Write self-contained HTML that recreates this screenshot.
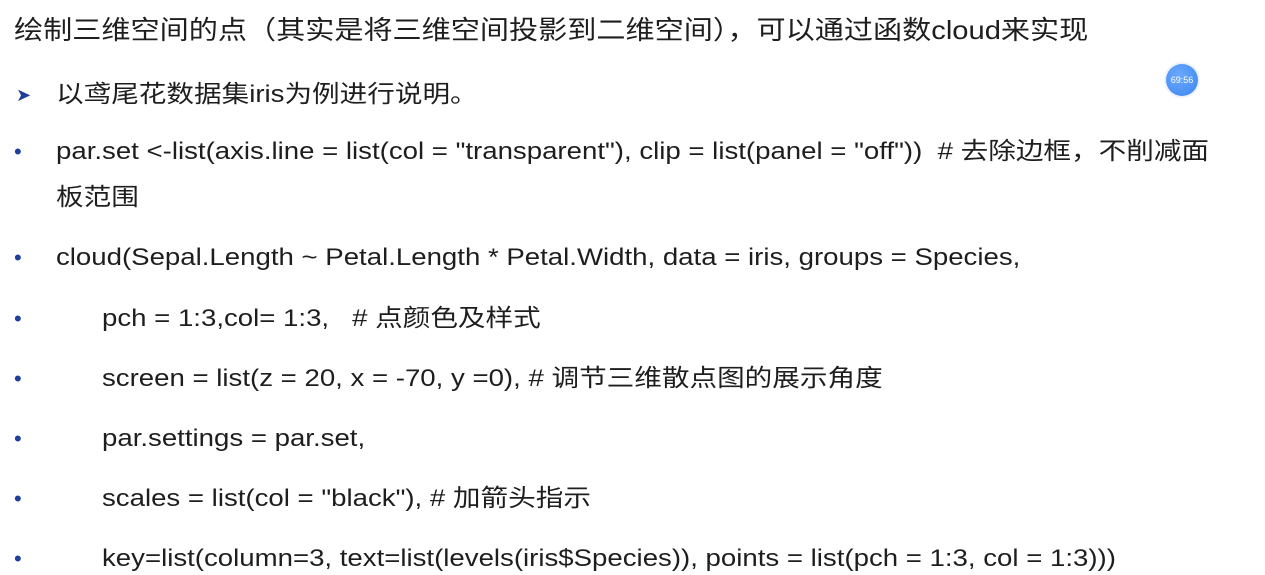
<!DOCTYPE html>
<html><head><meta charset="utf-8"><style>
body{margin:0;width:1265px;height:575px;background:#fff;overflow:hidden;position:relative;font-family:"Liberation Sans","Noto Sans CJK SC",sans-serif;color:#1e1e1e}
.l{position:absolute;white-space:nowrap;font-size:24px;line-height:30px;transform:scaleX(1.15);transform-origin:0 50%}
.t{left:14px;top:15px;font-size:26px;transform:scaleX(1.12)}
.b{position:absolute;left:14px;color:#1f3f9a;font-size:22px;line-height:30px}
.clock{position:absolute;left:1166px;top:64px;width:32px;height:32px;border-radius:50%;background:radial-gradient(circle at 40% 35%,#6aa8ff,#3d86f0);box-shadow:0 0 0 2px #eef3fb;color:#fff;font-size:9px;line-height:32px;text-align:center}
</style></head><body>
<div class="l t">绘制三维空间的点（其实是将三维空间投影到二维空间），可以通过函数cloud来实现</div>
<div class="b" style="top:80px;left:16px;font-size:18px">➤</div>
<div class="l" style="left:56px;top:80px">以鸢尾花数据集iris为例进行说明。</div>
<div class="clock">69:56</div>
<div class="b" style="top:137px">•</div>
<div class="l" style="left:56px;top:137px">par.set &lt;-list(axis.line = list(col = "transparent"), clip = list(panel = "off"))&nbsp; # 去除边框，不削减面</div>
<div class="l" style="left:56px;top:183px">板范围</div>
<div class="b" style="top:243px">•</div>
<div class="l" style="left:56px;top:243px">cloud(Sepal.Length ~ Petal.Length * Petal.Width, data = iris, groups = Species,</div>
<div class="b" style="top:304px">•</div>
<div class="l" style="left:102px;top:304px">pch = 1:3,col= 1:3,&nbsp;&nbsp; # 点颜色及样式</div>
<div class="b" style="top:364px">•</div>
<div class="l" style="left:102px;top:364px">screen = list(z = 20, x = -70, y =0), # 调节三维散点图的展示角度</div>
<div class="b" style="top:424px">•</div>
<div class="l" style="left:102px;top:424px">par.settings = par.set,</div>
<div class="b" style="top:484px">•</div>
<div class="l" style="left:102px;top:484px">scales = list(col = "black"), # 加箭头指示</div>
<div class="b" style="top:544px">•</div>
<div class="l" style="left:102px;top:544px">key=list(column=3, text=list(levels(iris$Species)), points = list(pch = 1:3, col = 1:3)))</div>
</body></html>
